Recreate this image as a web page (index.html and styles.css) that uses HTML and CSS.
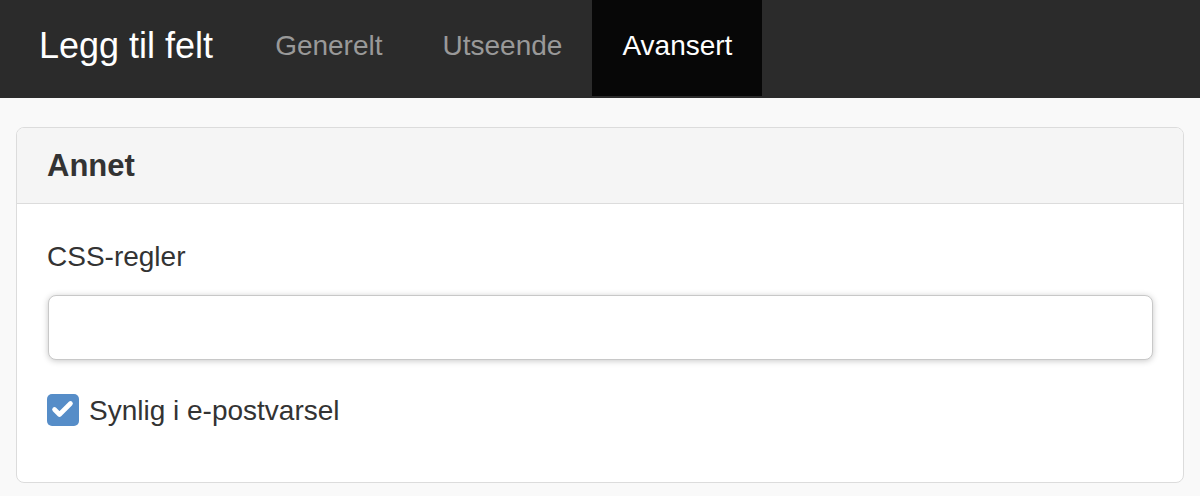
FILE: index.html
```html
<!DOCTYPE html>
<html lang="no">
<head>
<meta charset="utf-8">
<title>Legg til felt</title>
<link rel="stylesheet" href="styles.css">
</head>
<body>
<header class="topbar">
  <h1 class="title">Legg til felt</h1>
  <nav class="tabs">
    <a class="tab">Generelt</a>
    <a class="tab">Utseende</a>
    <a class="tab active">Avansert</a>
  </nav>
</header>
<main class="content">
  <section class="panel">
    <div class="panel-heading"><h2 class="panel-title">Annet</h2></div>
    <div class="panel-body">
      <label class="field-label" for="css">CSS-regler</label>
      <input class="form-control" id="css" type="text">
      <label class="check-row">
        <span class="checkbox">
          <svg width="32" height="32" viewBox="0 0 32 32"><polyline points="7.5,15.5 12.5,20.5 23.5,9.5" fill="none" stroke="#fff" stroke-width="4.6" stroke-linecap="round" stroke-linejoin="round"/></svg>
        </span>
        <span class="check-text">Synlig i e-postvarsel</span>
      </label>
    </div>
  </section>
</main>
</body>
</html>
```

FILE: styles.css
```css
* { box-sizing: border-box; }
html, body { margin: 0; padding: 0; }
body {
  background: #f9f9f9;
  font-family: "Liberation Sans", Arial, Helvetica, sans-serif;
  color: #333;
}
.topbar {
  display: flex;
  align-items: flex-start;
  height: 98px;
  background: #2b2b2b;
  padding-left: 39px;
}
.title {
  margin: 0;
  font-size: 36px;
  font-weight: normal;
  color: #fff;
  line-height: 91px;
  margin-right: 32px;
}
.tabs { display: flex; }
.tab {
  display: block;
  height: 96px;
  line-height: 91px;
  padding: 0 30px;
  font-size: 28px;
  color: #999;
}
.tab.active {
  background: #070707;
  color: #fff;
}
.content { padding: 29px 16px 0; }
.panel {
  background: #fff;
  border: 1px solid #dcdcdc;
  border-radius: 8px;
  overflow: hidden;
}
.panel-heading {
  background: #f5f5f5;
  border-bottom: 1px solid #dcdcdc;
  padding: 21px 30px;
}
.panel-title {
  margin: 0;
  font-size: 31px;
  font-weight: bold;
  line-height: 33px;
  color: #333;
}
.panel-body {
  padding: 33px 30px 52px;
}
.field-label {
  display: block;
  font-size: 28px;
  line-height: 40px;
  margin-bottom: 18px;
}
.form-control {
  display: block;
  height: 65px;
  border: 1px solid #c8c8c8;
  border-radius: 8px;
  box-shadow: 0 1px 6px rgba(0, 0, 0, 0.22);
  background: #fff;
  margin: 0 0 30px 1px;
  width: calc(100% - 1px);
}
.check-row {
  display: flex;
  align-items: center;
  height: 40px;
  font-size: 28px;
}
.checkbox {
  width: 32px;
  height: 32px;
  border-radius: 5px;
  background: #568dc8;
  margin-right: 10px;
  display: flex;
}
.check-text { line-height: 40px; padding-top: 2px; }
```
